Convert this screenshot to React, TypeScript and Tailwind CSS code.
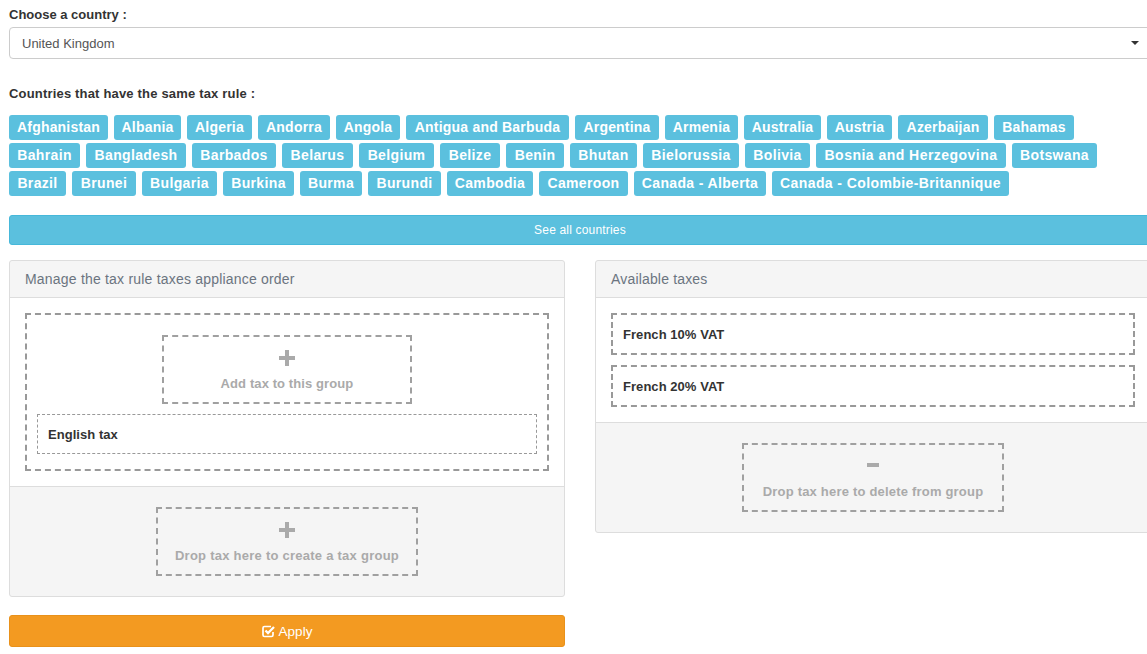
const tagRows = [
  {
    track: 'tracking-[0.2px]',
    items: [
      ['Afghanistan', 'w-[99px]'], ['Albania', 'w-[67px]'], ['Algeria', 'w-[65px]'], ['Andorra', 'w-[72px]'],
      ['Angola', 'w-[64px]'], ['Antigua and Barbuda', 'w-[163px]'], ['Argentina', 'w-[84px]'], ['Armenia', 'w-[73px]'],
      ['Australia', 'w-[77px]'], ['Austria', 'w-[65px]'], ['Azerbaijan', 'w-[90px]'], ['Bahamas', 'w-[80px]'],
    ],
  },
  {
    track: 'tracking-[0.35px]',
    items: [
      ['Bahrain', 'w-[71px]'], ['Bangladesh', 'w-[100px]'], ['Barbados', 'w-[84px]'], ['Belarus', 'w-[71px]'],
      ['Belgium', 'w-[75px]'], ['Belize', 'w-[60px]'], ['Benin', 'w-[58px]'], ['Bhutan', 'w-[67px]'],
      ['Bielorussia', 'w-[96px]'], ['Bolivia', 'w-[65px]'], ['Bosnia and Herzegovina', 'w-[190px] tracking-[0.47px]'], ['Botswana', 'w-[85px]'],
    ],
  },
  {
    track: 'tracking-[0.35px]',
    items: [
      ['Brazil', 'w-[57px]'], ['Brunei', 'w-[64px]'], ['Bulgaria', 'w-[75px]'], ['Burkina', 'w-[71px]'],
      ['Burma', 'w-[62px]'], ['Burundi', 'w-[73px]'], ['Cambodia', 'w-[86px]'], ['Cameroon', 'w-[89px]'],
      ['Canada - Alberta', 'w-[132px]'], ['Canada - Colombie-Britannique', 'w-[237px] tracking-[0.4px]'],
    ],
  },
];

const DropZone = ({ minus, label, className }: { minus?: boolean; label: string; className: string }) => (
  <div className={`flex flex-col items-center h-[69px] pt-[13px] border-2 border-dashed border-[#a0a0a0] text-[#aaaaaa] ${className}`}>
    <svg width="16" height="16" viewBox="0 0 16 16" fill="currentColor">
      {minus ? <rect x="2" y="5" width="12" height="4" /> : <path d="M6 0h4v6h6v4h-6v6H6v-6H0V6h6z" />}
    </svg>
    <div className="mt-[9px] text-[13px] leading-[18px] font-bold">{label}</div>
  </div>
);

const TaxRow = ({ name }: { name: string }) => (
  <div className="h-[42px] flex items-center pl-[10px] pt-[1px] border-2 border-dashed border-[#999999] text-[13px] font-bold text-[#333333] tracking-[0.05px]">
    {name}
  </div>
);

const App = () => (
  <div className="w-[1147px] h-[654px] overflow-hidden bg-white font-['Liberation_Sans',Arial,sans-serif] text-[#333333]">
    <div className="w-[1142px] ml-[9px]">
      <div className="pt-[7px] h-[27px] text-[13px] leading-[16px] font-bold">Choose a country :</div>
      <div className="relative h-[32px] flex items-center pl-[12px] pt-[1px] border border-[#cccccc] rounded-[4px] text-[13px] text-[#555555]">
        United Kingdom
        <span className="absolute left-[1121px] top-[13px] w-0 h-0 border-x-[4px] border-t-[4px] border-x-transparent border-t-[#333333]" />
      </div>
      <div className="mt-[26px] h-[20px] pt-[1px] text-[13px] leading-[16px] font-bold tracking-[0.18px]">Countries that have the same tax rule :</div>
      <div className="mt-[10px] flex flex-col gap-y-[3px]">
        {tagRows.map((row) => (
          <div key={row.items[0][0]} className={`flex gap-x-[6px] ${row.track}`}>
            {row.items.map(([name, cls]) => (
              <span key={name} className={`h-[25px] flex items-center justify-center whitespace-nowrap rounded-[3px] bg-[#5bc0de] text-white text-[14px] font-bold ${cls}`}>
                {name}
              </span>
            ))}
          </div>
        ))}
      </div>
      <div className="mt-[19px] h-[30px] flex items-center justify-center rounded-[3px] bg-[#5bc0de] border border-[#46b8da] text-white text-[12px] tracking-[0.18px]">
        See all countries
      </div>
      <div className="mt-[15px] flex items-start gap-[30px]">
        <div className="w-[556px]">
          <div className="border border-[#dddddd] rounded-[3px] bg-[#f5f5f5]">
            <div className="h-[37px] flex items-center pl-[15px] border-b border-[#dddddd] text-[14px] text-[#6b7480] tracking-[0.2px]">
              Manage the tax rule taxes appliance order
            </div>
            <div className="bg-white p-[15px]">
              <div className="h-[158px] border-2 border-dashed border-[#999999] px-[10px] pt-[20px]">
                <DropZone label="Add tax to this group" className="w-[250px] mx-auto tracking-[0.1px]" />
                <div className="mt-[10px] h-[40px] flex items-center pl-[10px] pt-[1px] border border-dashed border-[#999999] text-[13px] font-bold text-[#333333] tracking-[0.05px]">
                  English tax
                </div>
              </div>
            </div>
            <div className="border-t border-[#dddddd] py-[20px]">
              <DropZone label="Drop tax here to create a tax group" className="w-[262px] mx-auto tracking-[0.25px]" />
            </div>
          </div>
          <div className="mt-[18px] h-[32px] flex items-center justify-center gap-[4px] rounded-[3px] bg-[#f39a21] border border-[#e9911a] text-white text-[13.5px]">
            <svg width="13" height="13" viewBox="0 0 13 13" fill="none" stroke="currentColor">
              <path d="M11 7V10a1.5 1.5 0 0 1-1.5 1.5h-7A1.5 1.5 0 0 1 1 10V3a1.5 1.5 0 0 1 1.5-1.5H9" strokeWidth="1.7" />
              <path d="M3.5 5.5l2.5 2.5 6-6" strokeWidth="2.3" />
            </svg>
            <span className="pt-[2px]">Apply</span>
          </div>
        </div>
        <div className="w-[556px] border border-[#dddddd] rounded-[3px] bg-[#f5f5f5]">
          <div className="h-[37px] flex items-center pl-[15px] border-b border-[#dddddd] text-[14px] text-[#6b7480] tracking-[0.17px]">Available taxes</div>
          <div className="bg-white p-[15px] flex flex-col gap-[10px]">
            <TaxRow name="French 10% VAT" />
            <TaxRow name="French 20% VAT" />
          </div>
          <div className="border-t border-[#dddddd] py-[20px]">
            <DropZone minus label="Drop tax here to delete from group" className="w-[262px] mx-auto tracking-[0.2px]" />
          </div>
        </div>
      </div>
    </div>
  </div>
);

export default App;
